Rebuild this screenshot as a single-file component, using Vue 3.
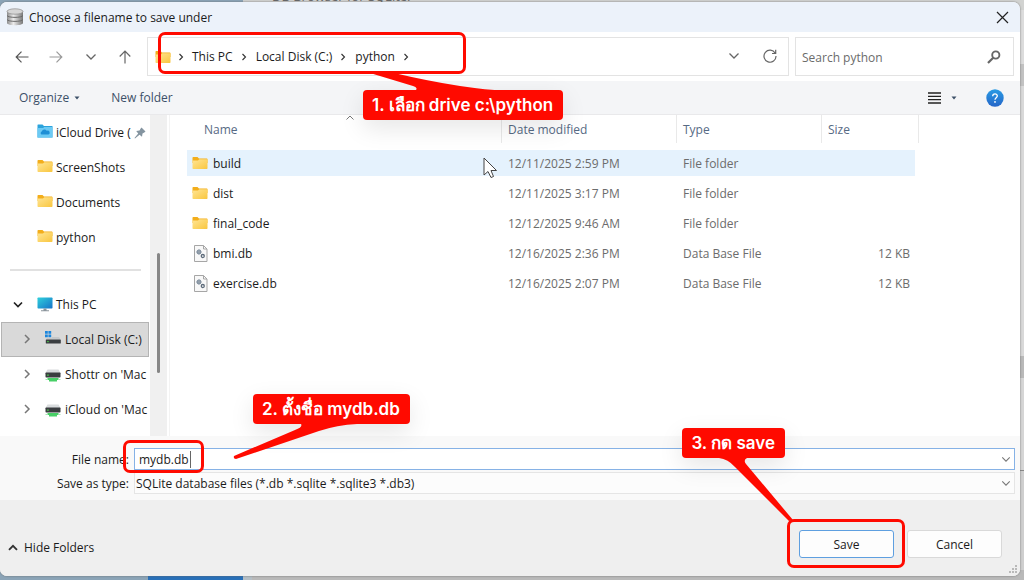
<script setup>
import { ref } from 'vue'

const fileName = ref('mydb.db')
const fileType = ref('sqlite')
const search = ref('')

const path = ['This PC', 'Local Disk (C:)', 'python']
const quick = [
  { name: 'iCloud Drive (', icon: 'cloud', pinned: true },
  { name: 'ScreenShots', icon: 'folder' },
  { name: 'Documents', icon: 'folder' },
  { name: 'python', icon: 'folder' },
]
const drives = [
  { name: 'Local Disk (C:)', icon: 'disk', selected: true },
  { name: "Shottr on 'Mac", icon: 'net' },
  { name: "iCloud on 'Mac", icon: 'net' },
]
const files = [
  { name: 'build', date: '12/11/2025 2:59 PM', type: 'File folder', size: '', folder: true, hover: true },
  { name: 'dist', date: '12/11/2025 3:17 PM', type: 'File folder', size: '', folder: true },
  { name: 'final_code', date: '12/12/2025 9:46 AM', type: 'File folder', size: '', folder: true },
  { name: 'bmi.db', date: '12/16/2025 2:36 PM', type: 'Data Base File', size: '12 KB' },
  { name: 'exercise.db', date: '12/16/2025 2:07 PM', type: 'Data Base File', size: '12 KB' },
]
</script>

<template>
  <div class="desktop">
    <svg class="defs" width="0" height="0" aria-hidden="true">
      <defs>
        <linearGradient id="gFolder" x1="0" y1="0" x2="1" y2="1">
          <stop offset="0" stop-color="#ffe594" /><stop offset="1" stop-color="#f9c63f" />
        </linearGradient>
        <linearGradient id="gScreen" x1="0" y1="0" x2="1" y2="1">
          <stop offset="0" stop-color="#2fd0dc" /><stop offset="1" stop-color="#1673c8" />
        </linearGradient>
        <linearGradient id="gDb" x1="0" y1="0" x2="1" y2="0">
          <stop offset="0" stop-color="#8c8c8c" /><stop offset="0.4" stop-color="#ececec" /><stop offset="1" stop-color="#777" />
        </linearGradient>
        <linearGradient id="gHelp" x1="0" y1="0" x2="0" y2="1">
          <stop offset="0" stop-color="#2a9be4" /><stop offset="1" stop-color="#2465c8" />
        </linearGradient>
        <symbol id="folder" viewBox="0 0 16 14">
          <path d="M0.500 1.800Q0.500 1 1.300 1H5.500L7 2.600H14.800Q15.500 2.600 15.500 3.400V7H0.500Z" fill="#f3ae1b" />
          <path d="M0.500 4.500H6L7.300 3.300H15.500V12.200Q15.500 13 14.700 13H1.300Q0.500 13 0.500 12.200Z" fill="url(#gFolder)" />
        </symbol>
        <symbol id="cloud" viewBox="0 0 16 14">
          <path d="M0.500 1Q0.500 0.500 1 0.500H5.500L7 2H15.500V13.500H0.500Z" fill="#2ba3dc" />
          <path d="M0.500 4H6L7.300 3H15.500V13.500H0.500Z" fill="#6ccaf4" />
          <path d="M4.500 10.500A1.700 1.700 0 0 1 4.700 7.500A2.800 2.800 0 0 1 9.700 6.700A2 2 0 0 1 11.500 10.500Z" fill="#1e8fd6" />
        </symbol>
        <symbol id="disk" viewBox="0 0 16 14">
          <path d="M0 0H2.800V2.800H0ZM3.400 0H6.200V2.800H3.400ZM0 3.400H2.800V6.200H0ZM3.400 3.400H6.200V6.200H3.400Z" fill="#1b86dd" />
          <path d="M6.800 6H14L15.800 8.500H0.800L2 7H6.800Z" fill="#c5c8ca" />
          <rect x="0.800" y="8.500" width="15" height="4" rx="0.600" fill="#3a3d40" />
          <rect x="2.200" y="10" width="1.500" height="1.200" fill="#4bd04b" />
        </symbol>
        <symbol id="net" viewBox="0 0 16 14">
          <path d="M2.500 1.500H13.500L15.500 5H0.500Z" fill="#d9dcde" />
          <rect x="0.500" y="4.500" width="15" height="5" rx="0.700" fill="#3a3d40" />
          <rect x="2.200" y="6.500" width="1.500" height="1.300" fill="#4bd04b" />
          <path d="M2.500 10H13.500V12H2.500ZM4 12H12V13.500H4Z" fill="#48cf67" />
          <path d="M0.500 11H2.500V12H0.500ZM13.500 11H15.500V12H13.500Z" fill="#a7e6b4" />
        </symbol>
        <symbol id="right" viewBox="0 0 8 10">
          <path d="M2 1L6 5L2 9" fill="none" stroke="currentColor" stroke-width="1.500" />
        </symbol>
        <symbol id="down" viewBox="0 0 12 8">
          <path d="M1.500 1.500L6 6L10.500 1.500" fill="none" stroke="currentColor" stroke-width="1.300" />
        </symbol>
        <symbol id="file" viewBox="0 0 14 17">
          <path d="M0.500 0.500H9.500L13 4V16.500H0.500Z" fill="#f8f8f8" stroke="#a6a6a6" />
          <path d="M9.500 0.500V4H13" fill="none" stroke="#a6a6a6" />
          <circle cx="5" cy="7" r="1.800" fill="none" stroke="#8593a2" stroke-width="1.300" />
          <path d="M5 4.200V9.800M2.200 7H7.800M3 5L7 9M7 5L3 9" stroke="#8593a2" stroke-width="0.700" />
          <circle cx="8.800" cy="11" r="1.500" fill="#fff" stroke="#5d6b7a" stroke-width="1.300" />
        </symbol>
      </defs>
    </svg>

    <div class="behind-title"><span>DB Browser for SQLite.</span></div>
    <div class="behind-edge"></div>
    <div class="behind-bottom"><i class="blue"></i><i class="slate"></i><i class="grey"></i></div>

    <main class="dialog">
      <header class="title">
        <svg width="18" height="18" viewBox="0 0 18 18" aria-hidden="true">
          <path d="M1 3V15C1 18 17 18 17 15V3Z" fill="url(#gDb)" />
          <ellipse cx="9" cy="3.500" rx="8" ry="2.700" fill="#d6d6d6" stroke="#8d8d8d" stroke-width="0.700" />
          <path d="M1 7.500C2 10 16 10 17 7.500M1 11.500C2 14 16 14 17 11.500" fill="none" stroke="#6b6b6b" />
        </svg>
        <h1>Choose a filename to save under</h1>
        <button class="plain close" aria-label="Close">
          <svg width="13" height="13" viewBox="0 0 13 13"><path d="M1 1L12 12M12 1L1 12" stroke="#222" stroke-width="1.200" /></svg>
        </button>
      </header>

      <nav class="nav" aria-label="Navigation">
        <div class="arrows">
          <button class="plain" aria-label="Back"><svg width="14" height="12" viewBox="0 0 14 12"><path d="M13.500 6H1.200M6.500 0.700L1.200 6L6.500 11.300" fill="none" stroke="#555" stroke-width="1.200" /></svg></button>
          <button class="plain" aria-label="Forward"><svg width="14" height="12" viewBox="0 0 14 12"><path d="M0.500 6H12.800M7.500 0.700L12.800 6L7.500 11.300" fill="none" stroke="#9a9a9a" stroke-width="1.200" /></svg></button>
          <button class="plain" aria-label="Recent locations"><svg width="12" height="8" class="mid"><use href="#down" /></svg></button>
          <button class="plain" aria-label="Up"><svg width="12" height="14" viewBox="0 0 12 14"><path d="M6 13.500V1.200M0.700 6.500L6 1.200L11.300 6.500" fill="none" stroke="#666" stroke-width="1.200" /></svg></button>
        </div>
        <div class="address">
          <svg width="16" height="14" aria-hidden="true"><use href="#folder" /></svg>
          <svg class="sep first" width="6" height="8" aria-hidden="true"><use href="#right" /></svg>
          <template v-for="p in path" :key="p">
            <button class="plain crumb">{{ p }}</button>
            <svg class="sep" width="6" height="8" aria-hidden="true"><use href="#right" /></svg>
          </template>
          <span class="grow"></span>
          <button class="plain drop" aria-label="Previous locations"><svg width="12" height="8" class="mid"><use href="#down" /></svg></button>
          <button class="plain refresh" aria-label="Refresh">
            <svg width="14" height="14" viewBox="0 0 14 14"><path d="M12.200 4.200A6 6 0 1 0 13 7M12.700 0.800V4.500H9" fill="none" stroke="#666" stroke-width="1.200" /></svg>
          </button>
        </div>
        <label class="search">
          <input v-model="search" type="text" placeholder="Search python" aria-label="Search python" />
          <svg width="14" height="14" viewBox="0 0 14 14" aria-hidden="true"><circle cx="8.800" cy="5" r="3.600" fill="none" stroke="#666" stroke-width="1.900" /><path d="M6.200 7.800L1 13" stroke="#666" stroke-width="2.200" /></svg>
        </label>
      </nav>

      <div class="toolbar">
        <button class="plain">Organize<svg class="tri" width="6" height="4" viewBox="0 0 6 4"><path d="M0.500 0.500H5.500L3 3.500Z" fill="#3c5068" /></svg></button>
        <button class="plain">New folder</button>
        <span class="grow"></span>
        <button class="plain view" aria-label="Change view">
          <svg width="13" height="12" viewBox="0 0 13 12"><path d="M0 1H13M0 4.300H13M0 7.600H13M0 11H13" stroke="#222" stroke-width="1.300" /></svg>
        </button>
        <button class="plain more" aria-label="More view options"><svg width="6" height="4" viewBox="0 0 6 4"><path d="M0.500 0.500H5.500L3 3.500Z" fill="#3c5068" /></svg></button>
        <button class="plain help" aria-label="Help">
          <svg width="18" height="18" viewBox="0 0 18 18"><circle cx="9" cy="9" r="8.700" fill="url(#gHelp)" /><path d="M6.700 7.200C6.700 4 11.400 4.200 11.300 7C11.200 8.600 9 8.800 9 10.700" fill="none" stroke="#fff" stroke-width="1.300" /><circle cx="9" cy="12.900" r="0.900" fill="#fff" /></svg>
        </button>
      </div>

      <section class="body">
        <aside class="tree">
          <ul>
            <li v-for="q in quick" :key="q.name" class="quick">
              <svg class="icon" width="16" height="14" aria-hidden="true"><use :href="'#' + q.icon" /></svg>
              <span class="label">{{ q.name }}</span>
              <svg v-if="q.pinned" class="pin" width="12" height="12" viewBox="0 0 12 12" aria-hidden="true"><path d="M7.500 0.500L11.500 4.500L10.300 5.500L8.500 6.500L8 9.800L5.500 7.800L1 11.500L0.500 11L4.200 6.500L2.200 4L5.500 3.500L6.500 1.700Z" fill="#8494a0" /></svg>
            </li>
          </ul>
          <hr />
          <ul>
            <li class="pc">
              <svg class="open" width="12" height="8" viewBox="0 0 12 8" aria-hidden="true"><path d="M2 1.500L6 5.500L10 1.500" fill="none" stroke="#222" stroke-width="1.700" /></svg>
              <svg width="16" height="15" viewBox="0 0 16 15" aria-hidden="true"><rect x="0.500" y="0.500" width="15" height="11" rx="0.700" fill="url(#gScreen)" /><path d="M6.500 11.500H9.500V13.300H12V14.300H4V13.300H6.500Z" fill="#8b959c" /></svg>
              <span class="label">This PC</span>
            </li>
            <li v-for="d in drives" :key="d.name" class="drive" :class="{ selected: d.selected }">
              <svg class="twist" width="8" height="10" aria-hidden="true"><use href="#right" /></svg>
              <svg :class="{ icon: d.icon === 'disk' }" width="16" height="14" aria-hidden="true"><use :href="'#' + d.icon" /></svg>
              <span class="label">{{ d.name }}</span>
            </li>
          </ul>
        </aside>
        <div class="track"><i class="thumb"></i></div>
        <div class="list">
          <svg class="sort" width="8" height="5" viewBox="0 0 8 5" aria-hidden="true"><path d="M0.500 4.500L4 1L7.500 4.500" fill="none" stroke="#777" /></svg>
          <table>
            <colgroup><col class="c1" /><col class="c2" /><col class="c3" /><col class="c4" /></colgroup>
            <thead>
              <tr><th>Name</th><th>Date modified</th><th>Type</th><th>Size</th></tr>
            </thead>
            <tbody>
              <tr v-for="f in files" :key="f.name" :class="{ hover: f.hover }">
                <td>
                  <span class="name">
                    <svg v-if="f.folder" class="icon" width="16" height="14" aria-hidden="true"><use href="#folder" /></svg>
                    <svg v-else class="doc" width="14" height="17" aria-hidden="true"><use href="#file" /></svg>
                    {{ f.name }}
                  </span>
                </td>
                <td>{{ f.date }}</td>
                <td>{{ f.type }}</td>
                <td>{{ f.size }}</td>
              </tr>
            </tbody>
          </table>
        </div>
      </section>

      <form class="fields" @submit.prevent>
        <label for="fname">File name:</label>
        <div class="combo">
          <input id="fname" v-model="fileName" type="text" />
          <i class="caret"></i>
          <svg class="arrow" width="10" height="7" viewBox="0 0 12 8" aria-hidden="true"><use href="#down" /></svg>
        </div>
        <label for="ftype">Save as type:</label>
        <div class="combo">
          <select id="ftype" v-model="fileType">
            <option value="sqlite">SQLite database files (*.db *.sqlite *.sqlite3 *.db3)</option>
          </select>
          <svg class="arrow" width="10" height="7" viewBox="0 0 12 8" aria-hidden="true"><use href="#down" /></svg>
        </div>
      </form>

      <footer class="foot">
        <button class="plain hide">
          <svg width="10" height="7" viewBox="0 0 10 7"><path d="M1 5.800L5 1.800L9 5.800" fill="none" stroke="#333" stroke-width="1.900" /></svg>
          Hide Folders
        </button>
        <span class="grow"></span>
        <button class="btn primary">Save</button>
        <button class="btn">Cancel</button>
        <svg class="grip" width="9" height="9" viewBox="0 0 9 9" aria-hidden="true"><path d="M6 0H8V2H6ZM6 3H8V5H6ZM3 3H5V5H3ZM0 6H2V8H0ZM3 6H5V8H3ZM6 6H8V8H6Z" fill="#b9b9b9" /></svg>
      </footer>
    </main>

    <div class="mark m1"></div>
    <div class="mark m2"></div>
    <div class="mark m3"></div>
    <div class="callout k1">1. เลือก drive c:\python</div>
    <div class="callout k2">2. ตั้งชื่อ mydb.db</div>
    <div class="callout k3">3. กด save</div>
    <svg class="tail t1" width="140" height="20" viewBox="0 0 140 20" aria-hidden="true"><path d="M0 0L43 13Q49 15 45 18H140Q92 16 24 0Z" fill="#ff0a00" /></svg>
    <svg class="tail t2" width="130" height="38" viewBox="0 0 130 38" aria-hidden="true"><path d="M1 34L62 8Q70 5 68 2H124Q104 3 86 9L3 37Q0 37 1 34Z" fill="#ff0a00" /></svg>
    <svg class="tail t3" width="80" height="64" viewBox="0 0 80 64" aria-hidden="true"><path d="M0 0Q9 1 16 9L70 63L74 62L27 6Q24 2 28 0Z" fill="#ff0a00" /></svg>
    <svg class="cursor" width="15" height="22" viewBox="0 0 15 22" aria-hidden="true"><path d="M1 1V18L5 14.500L8 20.500L10.500 19.500L8 13.500H13.500Z" fill="#fff" stroke="#444" /></svg>
  </div>
</template>

<style>
html,
body,
#app {
  height: 100%;
}
body {
  margin: 0;
}
</style>

<style scoped>
* {
  box-sizing: border-box;
}
.desktop {
  position: relative;
  display: flex;
  min-height: 100%;
  padding: 2px 4px 4px 0;
  overflow: hidden;
  background: #8ba4b7;
  font: 12px/18px 'Open Sans', 'Noto Sans', sans-serif;
  color: #1b1b1b;
}
.defs {
  position: absolute;
}
.behind-title {
  position: absolute;
  top: 0;
  left: 243px;
  right: 0;
  height: 10px;
  background: #d2d3d1;
}
.behind-title span {
  position: absolute;
  left: 29px;
  bottom: 5px;
  font-size: 13px;
  color: #666;
}
.behind-edge {
  position: absolute;
  top: 10px;
  right: 0;
  bottom: 0;
  width: 10px;
  background: linear-gradient(#dcdcdc 54px, #c2c2c2 54px 76px, #d9d9d9 76px 346px, #b9b9b9 346px 368px, #d6d6d6 368px 460px, #888 460px 461px, #cfcfcf 461px);
}
.behind-bottom {
  position: absolute;
  left: 148px;
  right: 0;
  bottom: 0;
  height: 10px;
  display: flex;
}
.blue {
  width: 95px;
  background: #2870b9;
}
.slate {
  width: 9px;
  background: #b5bfc6;
}
.grey {
  flex: 1;
  background: #b9b9b9;
}
.dialog {
  position: relative;
  flex: 1;
  display: flex;
  flex-direction: column;
  border-radius: 7px;
  overflow: hidden;
  background: #fff;
  box-shadow: 0 0 2px #666;
}
.plain {
  display: flex;
  align-items: center;
  padding: 0;
  border: 0;
  background: none;
  font: inherit;
  color: inherit;
}
.grow {
  flex: 1;
}
.title {
  display: flex;
  align-items: center;
  height: 30px;
  padding: 0 11px 0 6px;
  gap: 5px;
  background: #ecf2fa;
}
h1 {
  flex: 1;
  margin: 0;
  padding-top: 2px;
  font-size: 12px;
  font-weight: 400;
}
.nav {
  display: flex;
  height: 49px;
  padding: 5px 6px 5px 0;
  gap: 6px;
}
.arrows {
  display: flex;
  width: 141px;
  padding: 0 4px 0 10px;
  justify-content: space-between;
}
.arrows .plain {
  width: 24px;
  justify-content: center;
}
.mid {
  color: #666;
}
.address,
.search {
  display: flex;
  align-items: center;
  border: 1px solid #e3e3e3;
  background: #fff;
}
.address {
  flex: 1;
  padding: 0 11px 0 7px;
}
.sep {
  margin: 0 9px 0 8px;
  color: #333;
}
.first {
  margin: 0 8px 0 7px;
}
.crumb {
  padding-top: 1px;
}
.drop {
  margin-right: 23px;
}
.drop,
.refresh {
  padding-bottom: 2px;
}
.search {
  width: 219px;
  padding: 0 12px 0 6px;
}
input {
  min-width: 0;
  flex: 1;
  border: 0;
  outline: 0;
  padding: 2px 0 0;
  background: none;
  font: inherit;
  color: inherit;
}
input::placeholder {
  color: #6b6b6b;
  opacity: 1;
}
.toolbar {
  display: flex;
  align-items: center;
  height: 34px;
  padding: 1px 16px 0 19px;
  border-bottom: 1px solid #e9e9eb;
  background: #f4f5f7;
  color: #3c5068;
}
.tri {
  margin: 0 31px 0 5px;
}
.view {
  margin-right: 10px;
}
.more {
  margin-right: 29px;
}
.body {
  display: flex;
  flex: 1;
  min-height: 321px;
}
.tree {
  width: 150px;
  overflow: hidden;
}
ul {
  margin: 0;
  padding: 0;
  list-style: none;
}
li {
  display: flex;
  align-items: center;
  height: 35px;
  gap: 3px;
  border: 1px solid transparent;
  white-space: nowrap;
}
li svg {
  flex: none;
}
.icon {
  margin-bottom: 3px;
}
.quick {
  padding: 0 3px 0 36px;
}
.quick .label {
  flex: 1;
  overflow: hidden;
}
.pc {
  padding-left: 11px;
}
.open {
  margin-right: 10px;
}
.drive {
  margin: 0 1px;
  padding-left: 21px;
  gap: 4px;
}
.twist {
  margin: 0 10px 2px 0;
  color: #777;
}
.selected {
  background: #d9d9d9;
  border-color: #b4b4b4;
}
hr {
  height: 2px;
  margin: 14px 9px 16px 10px;
  border: 0;
  background: #e1e1e1;
}
.track {
  display: flex;
  justify-content: center;
  width: 17px;
  padding-top: 138px;
  background: #f0f0f0;
}
.thumb {
  width: 3px;
  height: 120px;
  border-radius: 2px;
  background: #868686;
}
.list {
  position: relative;
  flex: 1;
  padding-left: 17px;
  margin-left: 2px;
  border-left: 1px solid #f3f3f3;
}
.sort {
  position: absolute;
  left: 176px;
  top: 0;
}
table {
  width: 732px;
  table-layout: fixed;
  border-collapse: separate;
  border-spacing: 0;
}
.c1 {
  width: 315px;
}
.c2 {
  width: 175px;
}
.c3 {
  width: 145px;
}
.c4 {
  width: 97px;
}
th {
  height: 33px;
  padding: 0 7px 4px 6px;
  text-align: left;
  font-weight: 400;
  color: #566a84;
  background: linear-gradient(#e9e9e9, #e9e9e9) right top / 1px 28px no-repeat;
}
th:first-child {
  padding-left: 17px;
}
td {
  height: 30px;
  padding: 2px 5px 0 6px;
  border: 0 solid transparent;
  border-width: 2px 0;
  background-clip: padding-box;
  color: #6c6c6c;
}
td:first-child {
  padding-left: 5px;
  color: #1b1b1b;
}
td:last-child {
  border-right-width: 4px;
  text-align: right;
}
.hover td {
  background-color: #e5f2fd;
}
.name {
  display: flex;
  align-items: center;
  gap: 5px;
}
.doc {
  margin: 0 0 2px 2px;
}
.fields {
  display: grid;
  grid-template: 22px 22px / 129px 1fr;
  column-gap: 5px;
  row-gap: 2px;
  padding: 12px 5px 6px 0;
  background: #f9f9f9;
}
.fields label {
  line-height: 24px;
  text-align: right;
}
.combo {
  position: relative;
  display: flex;
  border: 1px solid #86b2e6;
  background: #fff;
}
.combo input {
  padding-left: 4px;
}
.caret {
  position: absolute;
  left: 55px;
  top: 2px;
  width: 1px;
  height: 17px;
  background: #666;
}
.combo .arrow {
  position: absolute;
  right: 3px;
  top: 7px;
  color: #777;
}
select {
  flex: 1;
  appearance: none;
  padding: 1px 1px 0;
  border: 0;
  background: none;
  font: inherit;
  color: inherit;
}
label:last-of-type + .combo {
  border-color: #e5e5e5;
  background: #fcfcfc;
}
.foot {
  position: relative;
  display: flex;
  align-items: center;
  height: 76px;
  padding: 12px 18px 0 8px;
  gap: 13px;
  background: #efefef;
}
.hide {
  gap: 6px;
  padding-top: 7px;
}
.btn {
  width: 95px;
  height: 28px;
  padding: 2px 0 0;
  border: 1px solid #d9d9d9;
  border-radius: 3px;
  background: #fdfdfd;
  font: inherit;
  color: inherit;
}
.primary {
  border-color: #5e9fe0;
}
.grip {
  position: absolute;
  right: 2px;
  bottom: 2px;
}
.mark {
  position: absolute;
  border: 3px solid #ff0a00;
  border-radius: 7px;
}
.m1 {
  left: 158px;
  top: 32px;
  width: 308px;
  height: 42px;
}
.m2 {
  left: 123px;
  bottom: 107px;
  width: 81px;
  height: 33px;
}
.m3 {
  right: 119px;
  bottom: 12px;
  width: 118px;
  height: 49px;
}
.tail {
  position: absolute;
}
.t1 {
  left: 370px;
  top: 73px;
}
.t2 {
  left: 233px;
  bottom: 120px;
}
.t3 {
  right: 225px;
  bottom: 58px;
}
.callout {
  position: absolute;
  height: 30px;
  padding: 0 10px 0 9px;
  border-radius: 4px;
  background: #ff0a00;
  box-shadow: 0 8px 24px rgba(0, 0, 0, 0.1);
  font: 600 17px/30px Inter, 'Noto Sans', sans-serif;
  color: #fff;
  white-space: nowrap;
}
.k1 {
  left: 363px;
  top: 90px;
}
.k2 {
  left: 253px;
  bottom: 156px;
}
.k3 {
  right: 239px;
  bottom: 122px;
}
.cursor {
  position: absolute;
  left: 483px;
  top: 157px;
}
</style>
